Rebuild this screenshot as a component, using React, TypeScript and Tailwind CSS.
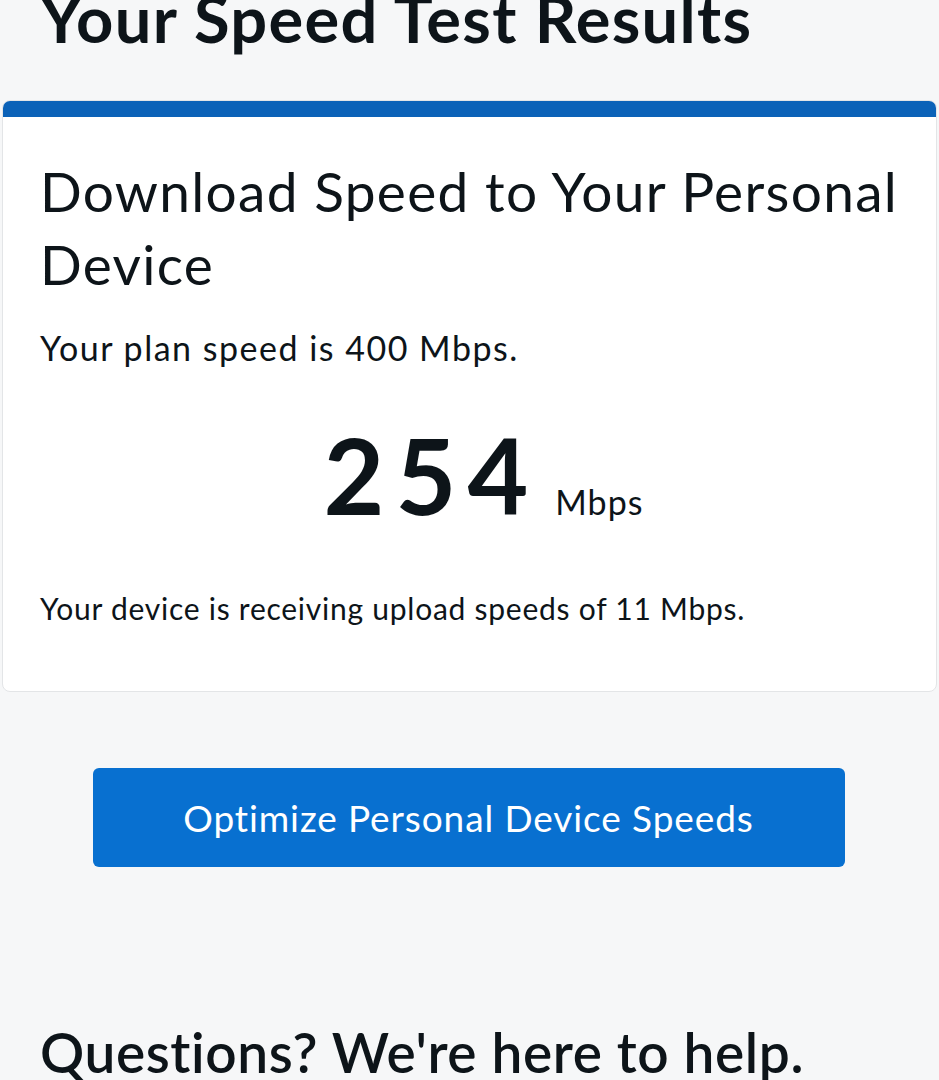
export default function App() {
  return (
    <div className="min-h-screen overflow-hidden bg-[#f6f7f8] font-['Lato',sans-serif] text-[#0d1419]">
      <h1 className="mt-[-14px] pl-10 text-[65px] font-bold leading-none tracking-[1.3px]">Your Speed Test Results</h1>

      <section className="ml-[2px] mt-[49px] w-[935px] overflow-hidden rounded-lg border border-[#e3e5e7] bg-white">
        <div className="h-4 bg-[#0b62b8]" />
        <div className="px-[37px] pb-[65px] pt-[38px]">
          <h2 className="text-[55px] font-normal leading-[73px] tracking-[1.3px]">Download Speed to Your Personal Device</h2>
          <p className="mt-[27px] text-[34px] leading-10 tracking-[1.5px]">Your plan speed is 400 Mbps.</p>
          <div className="mt-[54px] flex items-baseline justify-center gap-4 pl-7">
            <span className="text-[105px] font-bold leading-none tracking-[11px]">254</span>
            <span className="text-[34px] leading-none tracking-[1px]">Mbps</span>
          </div>
          <p className="mt-[63px] text-[30px] leading-9 tracking-[0.75px]">Your device is receiving upload speeds of 11 Mbps.</p>
        </div>
      </section>

      <div className="mt-[76px] flex justify-center pr-[2px]">
        <button className="h-[99px] w-[752px] rounded-md bg-[#0870d0] text-[37px] tracking-[0.9px] text-white">Optimize Personal Device Speeds</button>
      </div>

      <h2 className="mt-[158px] pl-10 text-[55px] font-semibold leading-none tracking-[0.6px]">Questions? We're here to help.</h2>
    </div>
  );
}
